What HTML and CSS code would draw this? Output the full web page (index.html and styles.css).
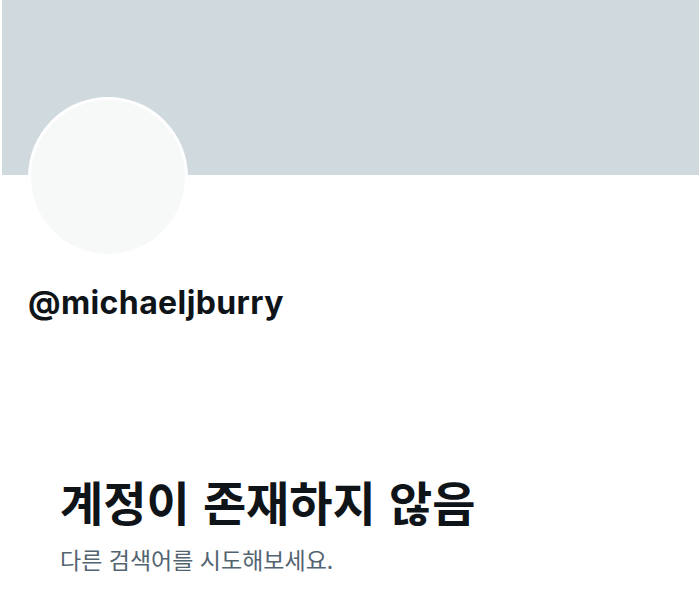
FILE: index.html
```html
<!DOCTYPE html>
<html lang="ko">
<head>
<meta charset="utf-8">
<link rel="stylesheet" href="styles.css">
</head>
<body>
<div class="page">
  <div class="banner"></div>
  <div class="avatar"></div>
  <div class="handle">@michaeljburry</div>
  <div class="empty">
    <h1 class="title">계정이 존재하지 않음</h1>
    <p class="sub">다른 검색어를 시도해보세요.</p>
  </div>
</div>
</body>
</html>
```
FILE: styles.css
```css
html, body {
  margin: 0;
  padding: 0;
  background: #ffffff;
}
.page {
  width: 700px;
  height: 615px;
  overflow: hidden;
  font-family: "Liberation Sans", "Noto Sans CJK KR", sans-serif;
}
.banner {
  margin-left: 2px;
  width: 697px;
  height: 175px;
  background: #cfd9de;
}
.avatar {
  margin: -78px 0 0 28px;
  width: 154px;
  height: 154px;
  border-radius: 50%;
  border: 3px solid #ffffff;
  background: #f7f9f9;
}
.handle {
  margin: 26px 0 0 28px;
  font-family: "Inter", "Liberation Sans", sans-serif;
  font-weight: 700;
  font-size: 32px;
  line-height: 40px;
  letter-spacing: 0.4px;
  color: #0f1419;
}
.empty {
  padding: 150px 0 0 60px;
}
.title {
  margin: 0;
  font-family: "Noto Sans CJK KR", sans-serif;
  font-weight: 700;
  font-size: 47px;
  line-height: 56px;
  color: #0f1419;
}
.sub {
  margin: 16px 0 0 0;
  font-family: "Noto Sans CJK KR", sans-serif;
  font-size: 23px;
  line-height: 28px;
  color: #536471;
}
```
